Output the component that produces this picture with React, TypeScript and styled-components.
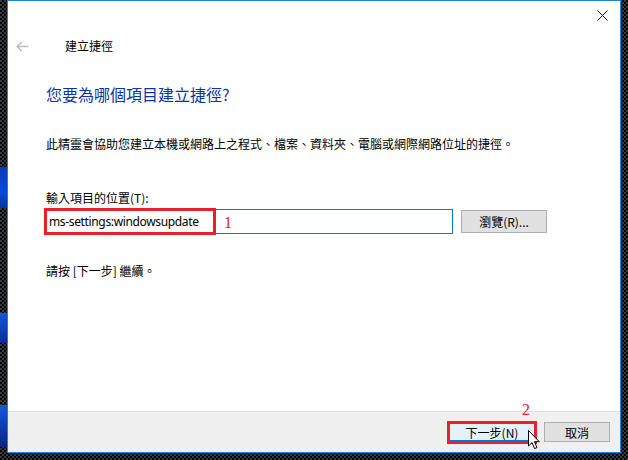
import React from "react";
import styled, { createGlobalStyle } from "styled-components";

const Global = createGlobalStyle`
  html, body { margin: 0; padding: 0; }
  body {
    width: 628px;
    height: 460px;
    overflow: hidden;
    font-family: "Noto Sans CJK TC", "Noto Sans", sans-serif;
    -webkit-font-smoothing: antialiased;
  }
`;

const Desktop = styled.div`
  width: 628px;
  height: 460px;
  box-sizing: border-box;
  padding: 0 7px 7px 7px;
  display: flex;
  background:
    linear-gradient(180deg, #0b3ab8, #0a49d6 60%, #07359e) 0 167px / 7px 41px no-repeat,
    linear-gradient(160deg, #1756dc, #0a2b93) 0 313px / 7px 30px no-repeat,
    linear-gradient(160deg, #1756dc, #082483) 0 405px / 7px 42px no-repeat,
    repeating-conic-gradient(#030303 0 25%, #3a3a3a 0 50%) 0 0 / 4px 4px;
`;

const Window = styled.div`
  position: relative;
  width: 614px;
  height: 453px;
  box-sizing: border-box;
  border: 1px solid #1883d7;
  background: #ffffff;
  display: flex;
  flex-direction: column;
`;

const TitleBar = styled.div`
  height: 29px;
  display: flex;
  justify-content: flex-end;
`;

const CloseButton = styled.div`
  width: 30px;
  height: 29px;
  margin-right: 3px;
  display: flex;
  align-items: center;
  justify-content: center;
`;

const NavRow = styled.div`
  height: 32px;
  display: flex;
  align-items: center;
  padding-left: 8px;
`;

const BackArrow = styled.div`
  width: 13px;
  height: 11px;
  display: flex;
  margin-right: 36px;
`;

const WizardTitle = styled.div`
  font-size: 12px;
  line-height: 16px;
  color: #000;
`;

const Body = styled.div`
  padding-left: 38px;
  display: flex;
  flex-direction: column;
  flex: 1;
`;

const Heading = styled.div`
  margin-top: 20px;
  font-size: 16px;
  line-height: 24px;
  color: #0b34a3;
`;

const Text = styled.div<{ $top: number }>`
  margin-top: ${(p) => p.$top}px;
  font-size: 12px;
  line-height: 16px;
  color: #000;
`;

const InputRow = styled.div`
  margin-top: 3px;
  height: 25px;
  display: flex;
  align-items: center;
  gap: 8px;
`;

const InputWrap = styled.div`
  position: relative;
  width: 409px;
  height: 25px;
  margin-left: -2px;
`;

const Field = styled.div`
  width: 100%;
  height: 100%;
  box-sizing: border-box;
  border: 1px solid #0078d7;
  padding-left: 4px;
  display: flex;
  align-items: center;
  font-family: "Noto Sans", "Noto Sans CJK TC", sans-serif;
  font-size: 12px;
  color: #000;
  letter-spacing: -0.35px;
`;

const RedBox = styled.div<{ $w: number }>`
  position: absolute;
  left: 0;
  top: -1px;
  width: ${(p) => p.$w}px;
  height: 27px;
  box-sizing: border-box;
  border: 3px solid #e8202a;
`;

const Mark = styled.span`
  position: absolute;
  font-family: "Liberation Serif", serif;
  font-size: 16px;
  line-height: 16px;
  color: #e8202a;
`;

const MarkOne = styled(Mark)`
  left: 180px;
  top: 6px;
`;

const Button = styled.div<{ $w: number; $h: number }>`
  width: ${(p) => p.$w}px;
  height: ${(p) => p.$h}px;
  box-sizing: border-box;
  border: 1px solid #adadad;
  background: #e1e1e1;
  display: flex;
  align-items: center;
  justify-content: center;
  font-size: 12px;
  color: #000;
`;

const Footer = styled.div`
  position: relative;
  height: 41px;
  box-sizing: border-box;
  border-top: 1px solid #dfdfdf;
  background: #f0f0f0;
  display: flex;
  align-items: center;
  justify-content: flex-end;
  padding-right: 10px;
  gap: 7px;
`;

const NextWrap = styled.div`
  position: relative;
  box-sizing: border-box;
  width: 90px;
  height: 23px;
  border: 3px solid #e8202a;
  display: flex;
  margin-top: 1px;
`;

const NextButton = styled.div`
  flex: 1;
  box-sizing: border-box;
  border-bottom: 1px solid #0078d7;
  background: #e5f1fb;
  display: flex;
  align-items: center;
  justify-content: center;
  font-size: 12px;
  color: #000;
`;

const MarkTwo = styled(Mark)`
  left: 72px;
  top: -22px;
`;

const Cursor = styled.svg`
  position: absolute;
  left: 78px;
  top: 6px;
`;

export default function App() {
  return (
    <>
      <Global />
      <Desktop>
        <Window>
          <TitleBar>
            <CloseButton>
              <svg width="11" height="11" viewBox="0 0 11 11">
                <path d="M0.5 0.5 L10.5 10.5 M10.5 0.5 L0.5 10.5" stroke="#111" strokeWidth="1" fill="none" />
              </svg>
            </CloseButton>
          </TitleBar>
          <NavRow>
            <BackArrow>
              <svg width="13" height="11" viewBox="0 0 13 11">
                <path d="M12.5 5.5 H1.2 M5.8 0.8 L1.1 5.5 L5.8 10.2" stroke="#bdbdbd" strokeWidth="1.4" fill="none" />
              </svg>
            </BackArrow>
            <WizardTitle>建立捷徑</WizardTitle>
          </NavRow>
          <Body>
            <Heading>您要為哪個項目建立捷徑?</Heading>
            <Text $top={30}>此精靈會協助您建立本機或網路上之程式、檔案、資料夾、電腦或網際網路位址的捷徑。</Text>
            <Text $top={38}>輸入項目的位置(T):</Text>
            <InputRow>
              <InputWrap>
                <Field>ms-settings:windowsupdate</Field>
                <RedBox $w={172} />
                <MarkOne>1</MarkOne>
              </InputWrap>
              <Button $w={86} $h={23}>瀏覽(R)...</Button>
            </InputRow>
            <Text $top={29}>請按 [下一步] 繼續。</Text>
          </Body>
          <Footer>
            <NextWrap>
              <NextButton>下一步(N)</NextButton>
              <MarkTwo>2</MarkTwo>
              <Cursor width="13" height="20" viewBox="0 0 13 20">
                <path d="M0.5 0.5 L0.5 16 L4 12.6 L6.6 18.6 L9 17.6 L6.4 11.7 L11.3 11.7 Z" fill="#fff" stroke="#000" strokeWidth="1" strokeLinejoin="round" />
              </Cursor>
            </NextWrap>
            <Button $w={66} $h={20}>取消</Button>
          </Footer>
        </Window>
      </Desktop>
    </>
  );
}
